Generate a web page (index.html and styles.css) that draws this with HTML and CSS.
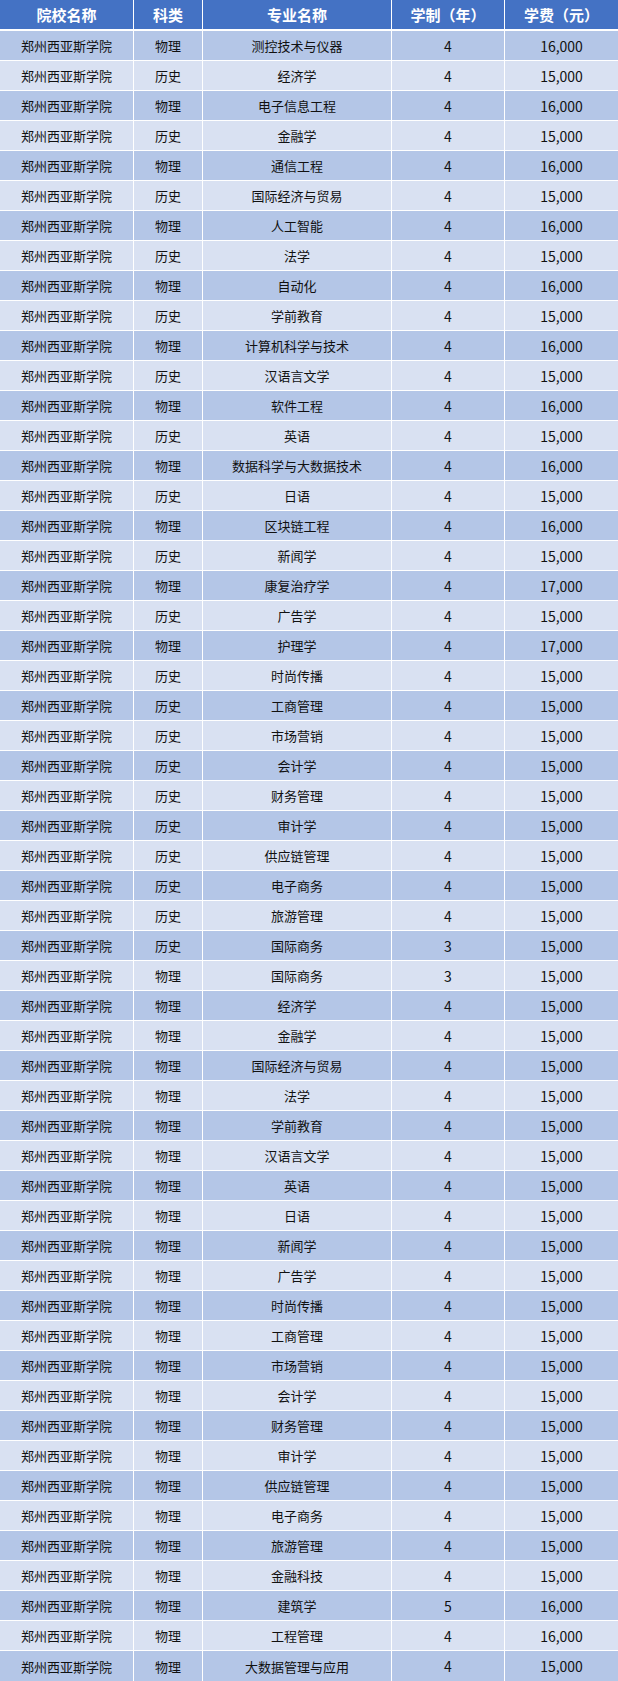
FILE: index.html
```html
<!DOCTYPE html>
<html lang="zh-CN">
<head>
<meta charset="utf-8">
<title>郑州西亚斯学院 学费</title>
<link rel="stylesheet" href="styles.css">
</head>
<body>
<div class="table">
<div class="row head"><div>院校名称</div><div>科类</div><div>专业名称</div><div>学制（年）</div><div>学费（元）</div></div>
<div class="row"><div>郑州西亚斯学院</div><div>物理</div><div>测控技术与仪器</div><div class="n">4</div><div class="n">16,000</div></div>
<div class="row"><div>郑州西亚斯学院</div><div>历史</div><div>经济学</div><div class="n">4</div><div class="n">15,000</div></div>
<div class="row"><div>郑州西亚斯学院</div><div>物理</div><div>电子信息工程</div><div class="n">4</div><div class="n">16,000</div></div>
<div class="row"><div>郑州西亚斯学院</div><div>历史</div><div>金融学</div><div class="n">4</div><div class="n">15,000</div></div>
<div class="row"><div>郑州西亚斯学院</div><div>物理</div><div>通信工程</div><div class="n">4</div><div class="n">16,000</div></div>
<div class="row"><div>郑州西亚斯学院</div><div>历史</div><div>国际经济与贸易</div><div class="n">4</div><div class="n">15,000</div></div>
<div class="row"><div>郑州西亚斯学院</div><div>物理</div><div>人工智能</div><div class="n">4</div><div class="n">16,000</div></div>
<div class="row"><div>郑州西亚斯学院</div><div>历史</div><div>法学</div><div class="n">4</div><div class="n">15,000</div></div>
<div class="row"><div>郑州西亚斯学院</div><div>物理</div><div>自动化</div><div class="n">4</div><div class="n">16,000</div></div>
<div class="row"><div>郑州西亚斯学院</div><div>历史</div><div>学前教育</div><div class="n">4</div><div class="n">15,000</div></div>
<div class="row"><div>郑州西亚斯学院</div><div>物理</div><div>计算机科学与技术</div><div class="n">4</div><div class="n">16,000</div></div>
<div class="row"><div>郑州西亚斯学院</div><div>历史</div><div>汉语言文学</div><div class="n">4</div><div class="n">15,000</div></div>
<div class="row"><div>郑州西亚斯学院</div><div>物理</div><div>软件工程</div><div class="n">4</div><div class="n">16,000</div></div>
<div class="row"><div>郑州西亚斯学院</div><div>历史</div><div>英语</div><div class="n">4</div><div class="n">15,000</div></div>
<div class="row"><div>郑州西亚斯学院</div><div>物理</div><div>数据科学与大数据技术</div><div class="n">4</div><div class="n">16,000</div></div>
<div class="row"><div>郑州西亚斯学院</div><div>历史</div><div>日语</div><div class="n">4</div><div class="n">15,000</div></div>
<div class="row"><div>郑州西亚斯学院</div><div>物理</div><div>区块链工程</div><div class="n">4</div><div class="n">16,000</div></div>
<div class="row"><div>郑州西亚斯学院</div><div>历史</div><div>新闻学</div><div class="n">4</div><div class="n">15,000</div></div>
<div class="row"><div>郑州西亚斯学院</div><div>物理</div><div>康复治疗学</div><div class="n">4</div><div class="n">17,000</div></div>
<div class="row"><div>郑州西亚斯学院</div><div>历史</div><div>广告学</div><div class="n">4</div><div class="n">15,000</div></div>
<div class="row"><div>郑州西亚斯学院</div><div>物理</div><div>护理学</div><div class="n">4</div><div class="n">17,000</div></div>
<div class="row"><div>郑州西亚斯学院</div><div>历史</div><div>时尚传播</div><div class="n">4</div><div class="n">15,000</div></div>
<div class="row"><div>郑州西亚斯学院</div><div>历史</div><div>工商管理</div><div class="n">4</div><div class="n">15,000</div></div>
<div class="row"><div>郑州西亚斯学院</div><div>历史</div><div>市场营销</div><div class="n">4</div><div class="n">15,000</div></div>
<div class="row"><div>郑州西亚斯学院</div><div>历史</div><div>会计学</div><div class="n">4</div><div class="n">15,000</div></div>
<div class="row"><div>郑州西亚斯学院</div><div>历史</div><div>财务管理</div><div class="n">4</div><div class="n">15,000</div></div>
<div class="row"><div>郑州西亚斯学院</div><div>历史</div><div>审计学</div><div class="n">4</div><div class="n">15,000</div></div>
<div class="row"><div>郑州西亚斯学院</div><div>历史</div><div>供应链管理</div><div class="n">4</div><div class="n">15,000</div></div>
<div class="row"><div>郑州西亚斯学院</div><div>历史</div><div>电子商务</div><div class="n">4</div><div class="n">15,000</div></div>
<div class="row"><div>郑州西亚斯学院</div><div>历史</div><div>旅游管理</div><div class="n">4</div><div class="n">15,000</div></div>
<div class="row"><div>郑州西亚斯学院</div><div>历史</div><div>国际商务</div><div class="n">3</div><div class="n">15,000</div></div>
<div class="row"><div>郑州西亚斯学院</div><div>物理</div><div>国际商务</div><div class="n">3</div><div class="n">15,000</div></div>
<div class="row"><div>郑州西亚斯学院</div><div>物理</div><div>经济学</div><div class="n">4</div><div class="n">15,000</div></div>
<div class="row"><div>郑州西亚斯学院</div><div>物理</div><div>金融学</div><div class="n">4</div><div class="n">15,000</div></div>
<div class="row"><div>郑州西亚斯学院</div><div>物理</div><div>国际经济与贸易</div><div class="n">4</div><div class="n">15,000</div></div>
<div class="row"><div>郑州西亚斯学院</div><div>物理</div><div>法学</div><div class="n">4</div><div class="n">15,000</div></div>
<div class="row"><div>郑州西亚斯学院</div><div>物理</div><div>学前教育</div><div class="n">4</div><div class="n">15,000</div></div>
<div class="row"><div>郑州西亚斯学院</div><div>物理</div><div>汉语言文学</div><div class="n">4</div><div class="n">15,000</div></div>
<div class="row"><div>郑州西亚斯学院</div><div>物理</div><div>英语</div><div class="n">4</div><div class="n">15,000</div></div>
<div class="row"><div>郑州西亚斯学院</div><div>物理</div><div>日语</div><div class="n">4</div><div class="n">15,000</div></div>
<div class="row"><div>郑州西亚斯学院</div><div>物理</div><div>新闻学</div><div class="n">4</div><div class="n">15,000</div></div>
<div class="row"><div>郑州西亚斯学院</div><div>物理</div><div>广告学</div><div class="n">4</div><div class="n">15,000</div></div>
<div class="row"><div>郑州西亚斯学院</div><div>物理</div><div>时尚传播</div><div class="n">4</div><div class="n">15,000</div></div>
<div class="row"><div>郑州西亚斯学院</div><div>物理</div><div>工商管理</div><div class="n">4</div><div class="n">15,000</div></div>
<div class="row"><div>郑州西亚斯学院</div><div>物理</div><div>市场营销</div><div class="n">4</div><div class="n">15,000</div></div>
<div class="row"><div>郑州西亚斯学院</div><div>物理</div><div>会计学</div><div class="n">4</div><div class="n">15,000</div></div>
<div class="row"><div>郑州西亚斯学院</div><div>物理</div><div>财务管理</div><div class="n">4</div><div class="n">15,000</div></div>
<div class="row"><div>郑州西亚斯学院</div><div>物理</div><div>审计学</div><div class="n">4</div><div class="n">15,000</div></div>
<div class="row"><div>郑州西亚斯学院</div><div>物理</div><div>供应链管理</div><div class="n">4</div><div class="n">15,000</div></div>
<div class="row"><div>郑州西亚斯学院</div><div>物理</div><div>电子商务</div><div class="n">4</div><div class="n">15,000</div></div>
<div class="row"><div>郑州西亚斯学院</div><div>物理</div><div>旅游管理</div><div class="n">4</div><div class="n">15,000</div></div>
<div class="row"><div>郑州西亚斯学院</div><div>物理</div><div>金融科技</div><div class="n">4</div><div class="n">15,000</div></div>
<div class="row"><div>郑州西亚斯学院</div><div>物理</div><div>建筑学</div><div class="n">5</div><div class="n">16,000</div></div>
<div class="row"><div>郑州西亚斯学院</div><div>物理</div><div>工程管理</div><div class="n">4</div><div class="n">16,000</div></div>
<div class="row"><div>郑州西亚斯学院</div><div>物理</div><div>大数据管理与应用</div><div class="n">4</div><div class="n">15,000</div></div>
</div>
</body>
</html>
```

FILE: styles.css
```css
html, body {
  margin: 0;
  padding: 0;
  background: #ffffff;
}

.table {
  display: flex;
  flex-direction: column;
  gap: 1px;
  width: 618px;
  background: #ffffff;
  font-family: "Noto Sans CJK SC", "Noto Sans", sans-serif;
  font-size: 13px;
  color: #111111;
}

.row {
  display: grid;
  grid-template-columns: 133px 68px 188px 112px 113px;
  column-gap: 1px;
  height: 29px;
}

.row > div {
  display: flex;
  align-items: center;
  justify-content: center;
  white-space: nowrap;
  background: #b4c6e7;
  line-height: 1;
}

.row:nth-child(odd) > div {
  background: #d9e1f2;
}

.row.head {
  margin-bottom: 1px;
}

.row.head > div {
  background: #4472c4;
  color: #ffffff;
  font-weight: bold;
  font-size: 15px;
}

.row > .n {
  font-size: 14px;
}

.row:last-child {
  height: 30px;
}
```
